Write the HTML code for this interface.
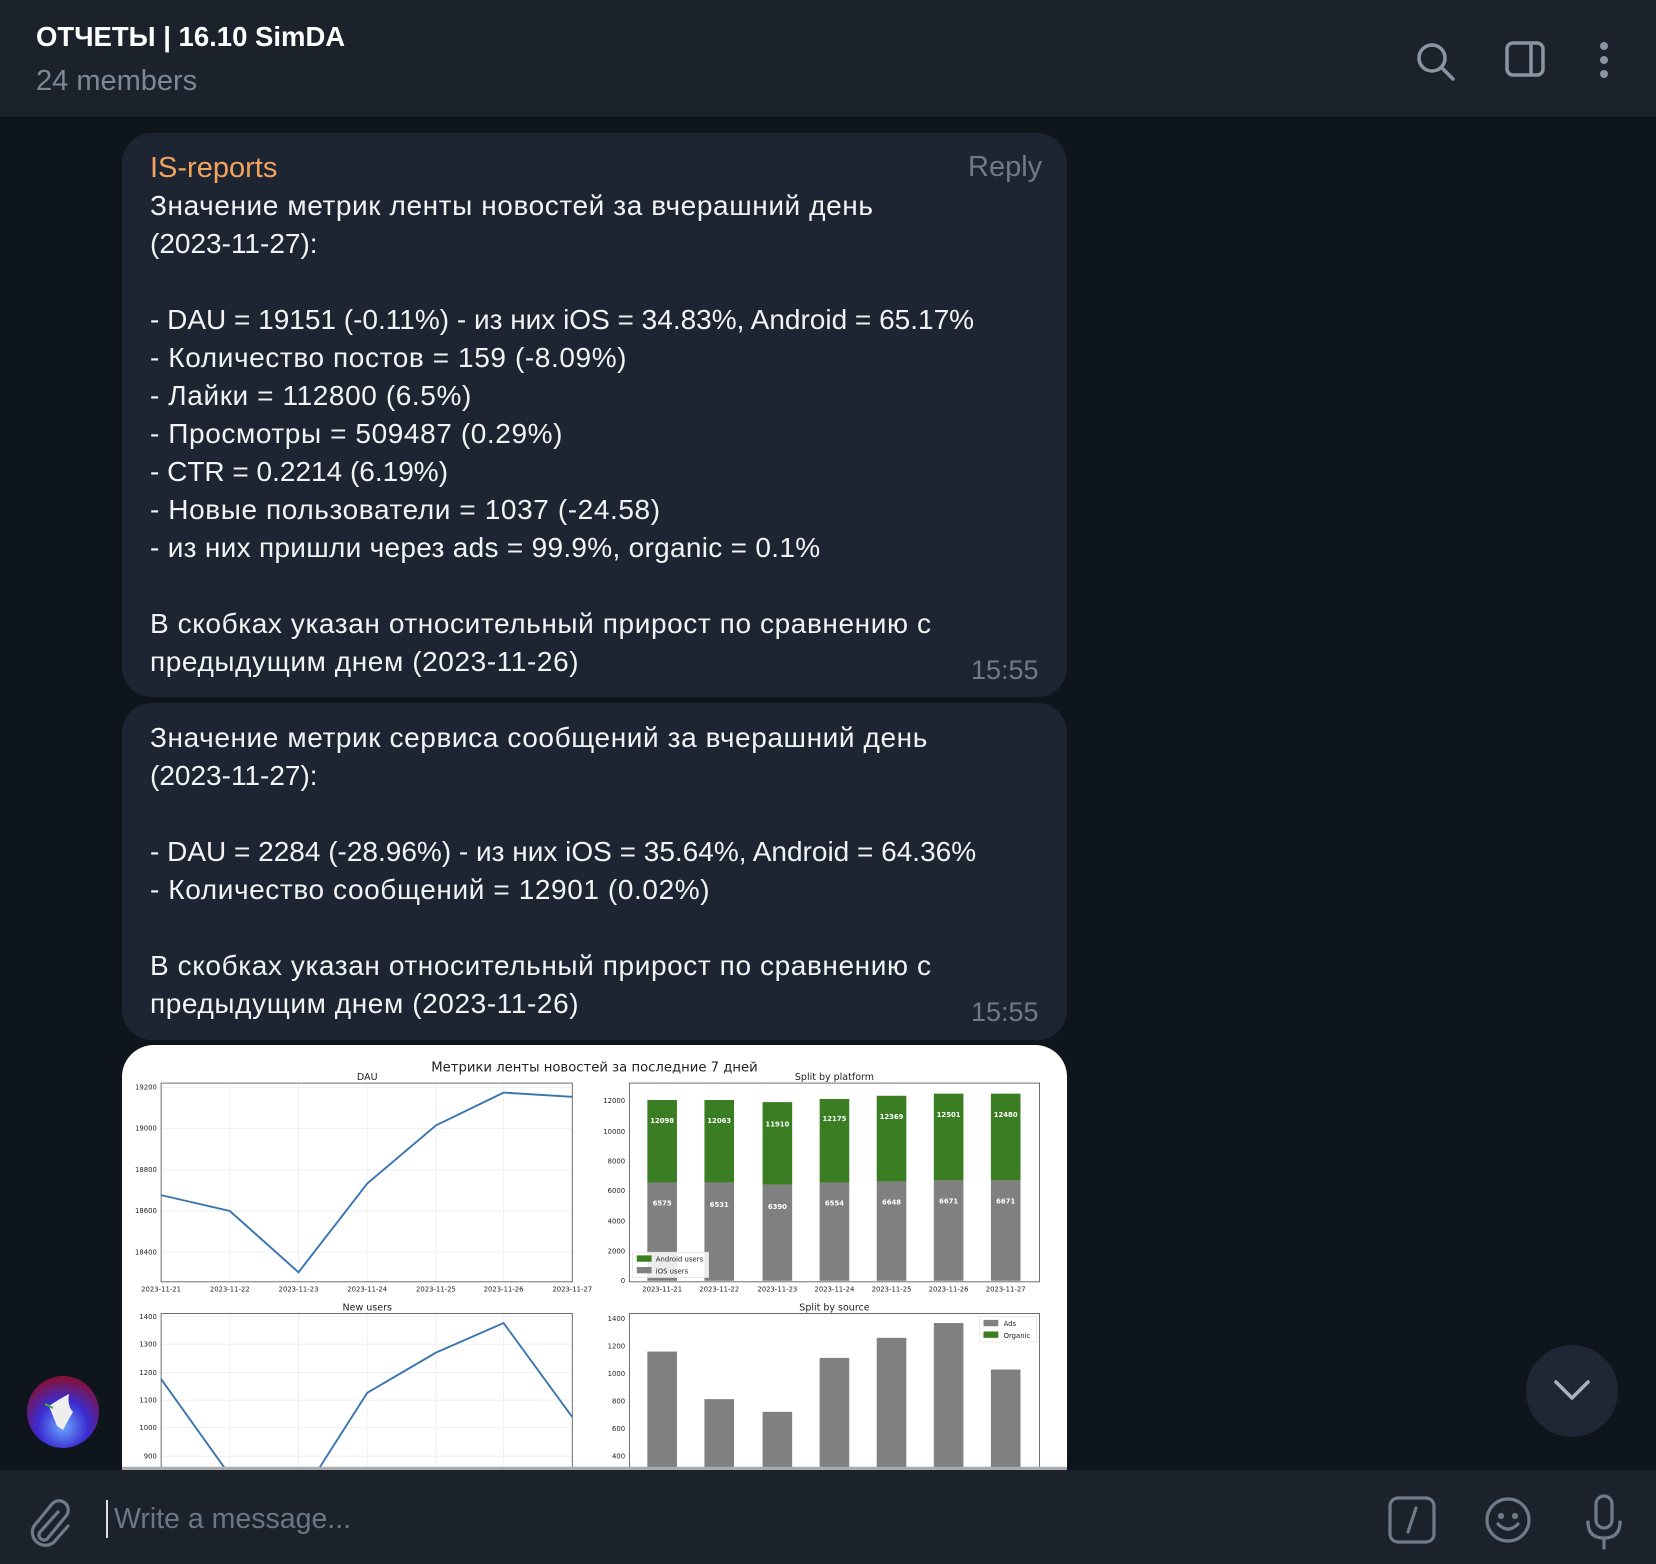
<!DOCTYPE html>
<html><head><meta charset="utf-8"><style>
*{margin:0;padding:0;box-sizing:border-box}
body{width:1656px;height:1564px;background:#0f151d;position:relative;overflow:hidden;font-family:"Liberation Sans","DejaVu Sans",sans-serif;color:#eef0f2}
.hdr{position:absolute;left:0;top:0;width:1656px;height:118px;background:#1b222c;border-bottom:1px solid #0a0e13}
.t{position:absolute;left:36px;top:21px;font-size:27.5px;font-weight:bold;color:#fff}
.m{position:absolute;left:36px;top:65px;font-size:29px;color:#7d8896}
.b{position:absolute;left:122px;width:945px;background:#1c2531;border-radius:30px}
.ln{position:absolute;left:150px;font-size:28px;white-space:nowrap;line-height:38px;color:#f2f3f5}
.cy{letter-spacing:0.6px}
.tm{position:absolute;font-size:27px;color:#6f7b88}
.inp{position:absolute;left:0;top:1470px;width:1656px;height:94px;background:#1b222c}
</style></head><body>
<div class="hdr">
<div class="t">ОТЧЕТЫ | 16.10 SimDA</div>
<div class="m">24 members</div>
<svg style="position:absolute;left:1412px;top:38px" width="48" height="48" viewBox="0 0 48 48" fill="none" stroke="#8a95a2" stroke-width="3.5"><circle cx="20" cy="20" r="13"/><line x1="30" y1="30" x2="41" y2="41" stroke-linecap="round"/></svg>
<svg style="position:absolute;left:1504px;top:40px" width="42" height="38" viewBox="0 0 42 38" fill="none" stroke="#8a95a2" stroke-width="3.5"><rect x="3" y="3" width="36" height="32" rx="6"/><line x1="27" y1="3" x2="27" y2="35"/></svg>
<svg style="position:absolute;left:1596px;top:40px" width="16" height="40" viewBox="0 0 16 40" fill="#8a95a2"><circle cx="8" cy="6" r="4"/><circle cx="8" cy="20" r="4"/><circle cx="8" cy="34" r="4"/></svg>
</div>

<div class="b" style="top:133px;height:564px"></div>
<div class="ln" style="top:149px;color:#f2a45f;font-size:29px">IS-reports</div>
<div class="tm" style="left:968px;top:151px;font-size:29px">Reply</div>
<div class="ln cy" style="top:187px">Значение метрик ленты новостей за вчерашний день</div>
<div class="ln" style="top:225px">(2023-11-27):</div>
<div class="ln" style="top:301px">- DAU = 19151 (-0.11%) - из них iOS = 34.83%, Android = 65.17%</div>
<div class="ln cy" style="top:339px">- Количество постов = 159 (-8.09%)</div>
<div class="ln cy" style="top:377px">- Лайки = 112800 (6.5%)</div>
<div class="ln cy" style="top:415px">- Просмотры = 509487 (0.29%)</div>
<div class="ln" style="top:453px">- CTR = 0.2214 (6.19%)</div>
<div class="ln cy" style="top:491px">- Новые пользователи = 1037 (-24.58)</div>
<div class="ln" style="top:529px;letter-spacing:0.3px">- из них пришли через ads = 99.9%, organic = 0.1%</div>
<div class="ln cy" style="top:605px">В скобках указан относительный прирост по сравнению с</div>
<div class="ln cy" style="top:643px">предыдущим днем (2023-11-26)</div>
<div class="tm" style="left:971px;top:655px">15:55</div>

<div class="b" style="top:703px;height:337px"></div>
<div class="ln cy" style="top:719px">Значение метрик сервиса сообщений за вчерашний день</div>
<div class="ln" style="top:757px">(2023-11-27):</div>
<div class="ln" style="top:833px">- DAU = 2284 (-28.96%) - из них iOS = 35.64%, Android = 64.36%</div>
<div class="ln cy" style="top:871px">- Количество сообщений = 12901 (0.02%)</div>
<div class="ln cy" style="top:947px">В скобках указан относительный прирост по сравнению с</div>
<div class="ln cy" style="top:985px">предыдущим днем (2023-11-26)</div>
<div class="tm" style="left:971px;top:997px">15:55</div>

<svg style="position:absolute;left:122px;top:1045px" width="945" height="425" viewBox="116 990 894 402" font-family="DejaVu Sans,sans-serif">
<path d="M146 990 H980 A30 30 0 0 1 1010 1020 V1392 H116 V1020 A30 30 0 0 1 146 990Z" fill="#fff"/>
<text x="563" y="1015" font-size="12.5" text-anchor="middle" fill="#222">Метрики ленты новостей за последние 7 дней</text>
<text x="348" y="1023" font-size="9" text-anchor="middle" fill="#222">DAU</text>
<g stroke="#eee" stroke-width="0.8">
<line x1="153" x2="542" y1="1030" y2="1030"/><line x1="153" x2="542" y1="1069" y2="1069"/><line x1="153" x2="542" y1="1108" y2="1108"/><line x1="153" x2="542" y1="1147" y2="1147"/><line x1="153" x2="542" y1="1186" y2="1186"/>
<line x1="218" x2="218" y1="1026" y2="1214"/><line x1="283" x2="283" y1="1026" y2="1214"/><line x1="348" x2="348" y1="1026" y2="1214"/><line x1="413" x2="413" y1="1026" y2="1214"/><line x1="477" x2="477" y1="1026" y2="1214"/>
</g>
<rect x="153" y="1026" width="389" height="188" fill="none" stroke="#555" stroke-width="0.8"/>
<g font-size="6.5" fill="#222" text-anchor="end"><text x="149" y="1032">19200</text><text x="149" y="1071">19000</text><text x="149" y="1110">18800</text><text x="149" y="1149">18600</text><text x="149" y="1188">18400</text></g>
<g font-size="6.5" fill="#222" text-anchor="middle"><text x="153" y="1223">2023-11-21</text><text x="218" y="1223">2023-11-22</text><text x="283" y="1223">2023-11-23</text><text x="348" y="1223">2023-11-24</text><text x="413" y="1223">2023-11-25</text><text x="477" y="1223">2023-11-26</text><text x="542" y="1223">2023-11-27</text></g>
<polyline points="153,1132 218,1147 283,1205 348,1121 413,1066 477,1035 542,1039" fill="none" stroke="#3a75b0" stroke-width="1.8"/>
<text x="790" y="1023" font-size="9" text-anchor="middle" fill="#222">Split by platform</text>
<rect x="596" y="1026" width="388" height="188" fill="none" stroke="#555" stroke-width="0.8"/>
<g font-size="6.5" fill="#222" text-anchor="end"><text x="592" y="1045">12000</text><text x="592" y="1074">10000</text><text x="592" y="1102">8000</text><text x="592" y="1130">6000</text><text x="592" y="1159">4000</text><text x="592" y="1187">2000</text><text x="592" y="1215">0</text></g>
<g fill="#808080"><rect x="613" y="1120" width="28" height="93"/><rect x="667" y="1120" width="28" height="93"/><rect x="722" y="1122" width="28" height="91"/><rect x="776" y="1120" width="28" height="93"/><rect x="830" y="1119" width="28" height="94"/><rect x="884" y="1118" width="28" height="95"/><rect x="938" y="1118" width="28" height="95"/></g>
<g fill="#3a7d23"><rect x="613" y="1042" width="28" height="78"/><rect x="667" y="1042" width="28" height="78"/><rect x="722" y="1044" width="28" height="78"/><rect x="776" y="1041" width="28" height="79"/><rect x="830" y="1038" width="28" height="81"/><rect x="884" y="1036" width="28" height="82"/><rect x="938" y="1036" width="28" height="82"/></g>
<g font-size="6.5" fill="#fff" text-anchor="middle" font-weight="bold"><text x="627" y="1064">12098</text><text x="681" y="1064">12063</text><text x="736" y="1067">11910</text><text x="790" y="1062">12175</text><text x="844" y="1060">12369</text><text x="898" y="1058">12501</text><text x="952" y="1058">12480</text>
<text x="627" y="1142">6575</text><text x="681" y="1143">6531</text><text x="736" y="1145">6390</text><text x="790" y="1142">6554</text><text x="844" y="1141">6648</text><text x="898" y="1140">6671</text><text x="952" y="1140">6671</text></g>
<rect x="599" y="1186" width="72" height="24" fill="#fff" fill-opacity="0.85" stroke="#ddd" stroke-width="0.6"/>
<rect x="603" y="1189" width="14" height="6" fill="#3a7d23"/><rect x="603" y="1200" width="14" height="6" fill="#808080"/>
<g font-size="6.5" fill="#222"><text x="621" y="1195">Android users</text><text x="621" y="1206">iOS users</text></g>
<g font-size="6.5" fill="#222" text-anchor="middle"><text x="627" y="1223">2023-11-21</text><text x="681" y="1223">2023-11-22</text><text x="736" y="1223">2023-11-23</text><text x="790" y="1223">2023-11-24</text><text x="844" y="1223">2023-11-25</text><text x="898" y="1223">2023-11-26</text><text x="952" y="1223">2023-11-27</text></g>
<text x="348" y="1241" font-size="9" text-anchor="middle" fill="#222">New users</text>
<g stroke="#eee" stroke-width="0.8">
<line x1="153" x2="542" y1="1247" y2="1247"/><line x1="153" x2="542" y1="1273" y2="1273"/><line x1="153" x2="542" y1="1300" y2="1300"/><line x1="153" x2="542" y1="1326" y2="1326"/><line x1="153" x2="542" y1="1352" y2="1352"/><line x1="153" x2="542" y1="1379" y2="1379"/>
<line x1="218" x2="218" y1="1244" y2="1392"/><line x1="283" x2="283" y1="1244" y2="1392"/><line x1="348" x2="348" y1="1244" y2="1392"/><line x1="413" x2="413" y1="1244" y2="1392"/><line x1="477" x2="477" y1="1244" y2="1392"/>
</g>
<path d="M153 1400 V1244 H542 V1400" fill="none" stroke="#555" stroke-width="0.8"/>
<g font-size="6.5" fill="#222" text-anchor="end"><text x="149" y="1249">1400</text><text x="149" y="1275">1300</text><text x="149" y="1302">1200</text><text x="149" y="1328">1100</text><text x="149" y="1354">1000</text><text x="149" y="1381">900</text></g>
<polyline points="153,1306 218,1397 283,1421 348,1319 413,1281 477,1253 542,1342" fill="none" stroke="#3a75b0" stroke-width="1.8"/>
<text x="790" y="1241" font-size="9" text-anchor="middle" fill="#222">Split by source</text>
<path d="M596 1400 V1244 H984 V1400" fill="none" stroke="#555" stroke-width="0.8"/>
<g font-size="6.5" fill="#222" text-anchor="end"><text x="592" y="1251">1400</text><text x="592" y="1277">1200</text><text x="592" y="1303">1000</text><text x="592" y="1329">800</text><text x="592" y="1355">600</text><text x="592" y="1381">400</text></g>
<g fill="#808080"><rect x="613" y="1280" width="28" height="120"/><rect x="667" y="1325" width="28" height="80"/><rect x="722" y="1337" width="28" height="60"/><rect x="776" y="1286" width="28" height="120"/><rect x="830" y="1267" width="28" height="130"/><rect x="884" y="1253" width="28" height="150"/><rect x="938" y="1297" width="28" height="100"/></g>
<rect x="927" y="1247" width="54" height="24" fill="#fff" stroke="#ddd" stroke-width="0.6"/>
<rect x="931" y="1250" width="14" height="6" fill="#808080"/><rect x="931" y="1261" width="14" height="6" fill="#3a7d23"/>
<g font-size="6.5" fill="#222"><text x="950" y="1256">Ads</text><text x="950" y="1267">Organic</text></g>
<rect x="116" y="1389" width="894" height="3" fill="#aaa"/>
</svg>

<svg style="position:absolute;left:27px;top:1376px" width="72" height="72" viewBox="0 0 72 72"><defs><radialGradient id="g" cx="50%" cy="70%" r="70%"><stop offset="0" stop-color="#6aa8ff"/><stop offset="0.5" stop-color="#3a2bd0"/><stop offset="1" stop-color="#8a1030"/></radialGradient></defs><circle cx="36" cy="36" r="36" fill="url(#g)"/><path d="M22 30 Q34 22 42 18 Q40 30 46 36 Q40 46 36 54 L30 50 Q26 40 22 30Z" fill="#eee"/><path d="M18 28 L26 32" stroke="#4a4" stroke-width="2"/></svg>
<div style="position:absolute;left:1526px;top:1345px;width:92px;height:92px;border-radius:50%;background:#1e2733"></div>
<svg style="position:absolute;left:1552px;top:1376px" width="40" height="28" viewBox="0 0 40 28" fill="none" stroke="#aab3bd" stroke-width="3.5" stroke-linecap="round" stroke-linejoin="round"><path d="M4 6 L20 22 L36 6"/></svg>

<div class="inp">
<svg style="position:absolute;left:28px;top:28px" width="44" height="50" viewBox="0 0 44 50" fill="none" stroke="#6f7b88" stroke-width="3.2" stroke-linecap="round"><path d="M30 14 L12 34 A5 5 0 0 0 20 40 L38 18 A9 9 0 0 0 24 6 L6 28 A13 13 0 0 0 26 44 L40 28"/></svg>
<div style="position:absolute;left:106px;top:30px;width:2px;height:38px;background:#ddd"></div>
<div style="position:absolute;left:114px;top:33px;font-size:28.5px;color:#6b7785">Write a message...</div>
<svg style="position:absolute;left:1388px;top:26px" width="48" height="48" viewBox="0 0 48 48" fill="none" stroke="#6f7b88" stroke-width="3.2"><rect x="2" y="2" width="44" height="44" rx="8"/><line x1="28" y1="12" x2="20" y2="36" stroke-linecap="round"/></svg>
<svg style="position:absolute;left:1484px;top:26px" width="48" height="48" viewBox="0 0 48 48" fill="none" stroke="#6f7b88" stroke-width="3.2"><circle cx="24" cy="24" r="21"/><circle cx="17" cy="20" r="1.5" fill="#6f7b88"/><circle cx="31" cy="20" r="1.5" fill="#6f7b88"/><path d="M14 28 Q24 38 34 28" stroke-linecap="round"/></svg>
<svg style="position:absolute;left:1584px;top:24px" width="40" height="56" viewBox="0 0 40 56" fill="none" stroke="#6f7b88" stroke-width="3.2" stroke-linecap="round"><rect x="12" y="2" width="16" height="32" rx="8"/><path d="M4 28 Q4 44 20 44 Q36 44 36 28 M20 44 V54"/></svg>
</div>
</body></html>
